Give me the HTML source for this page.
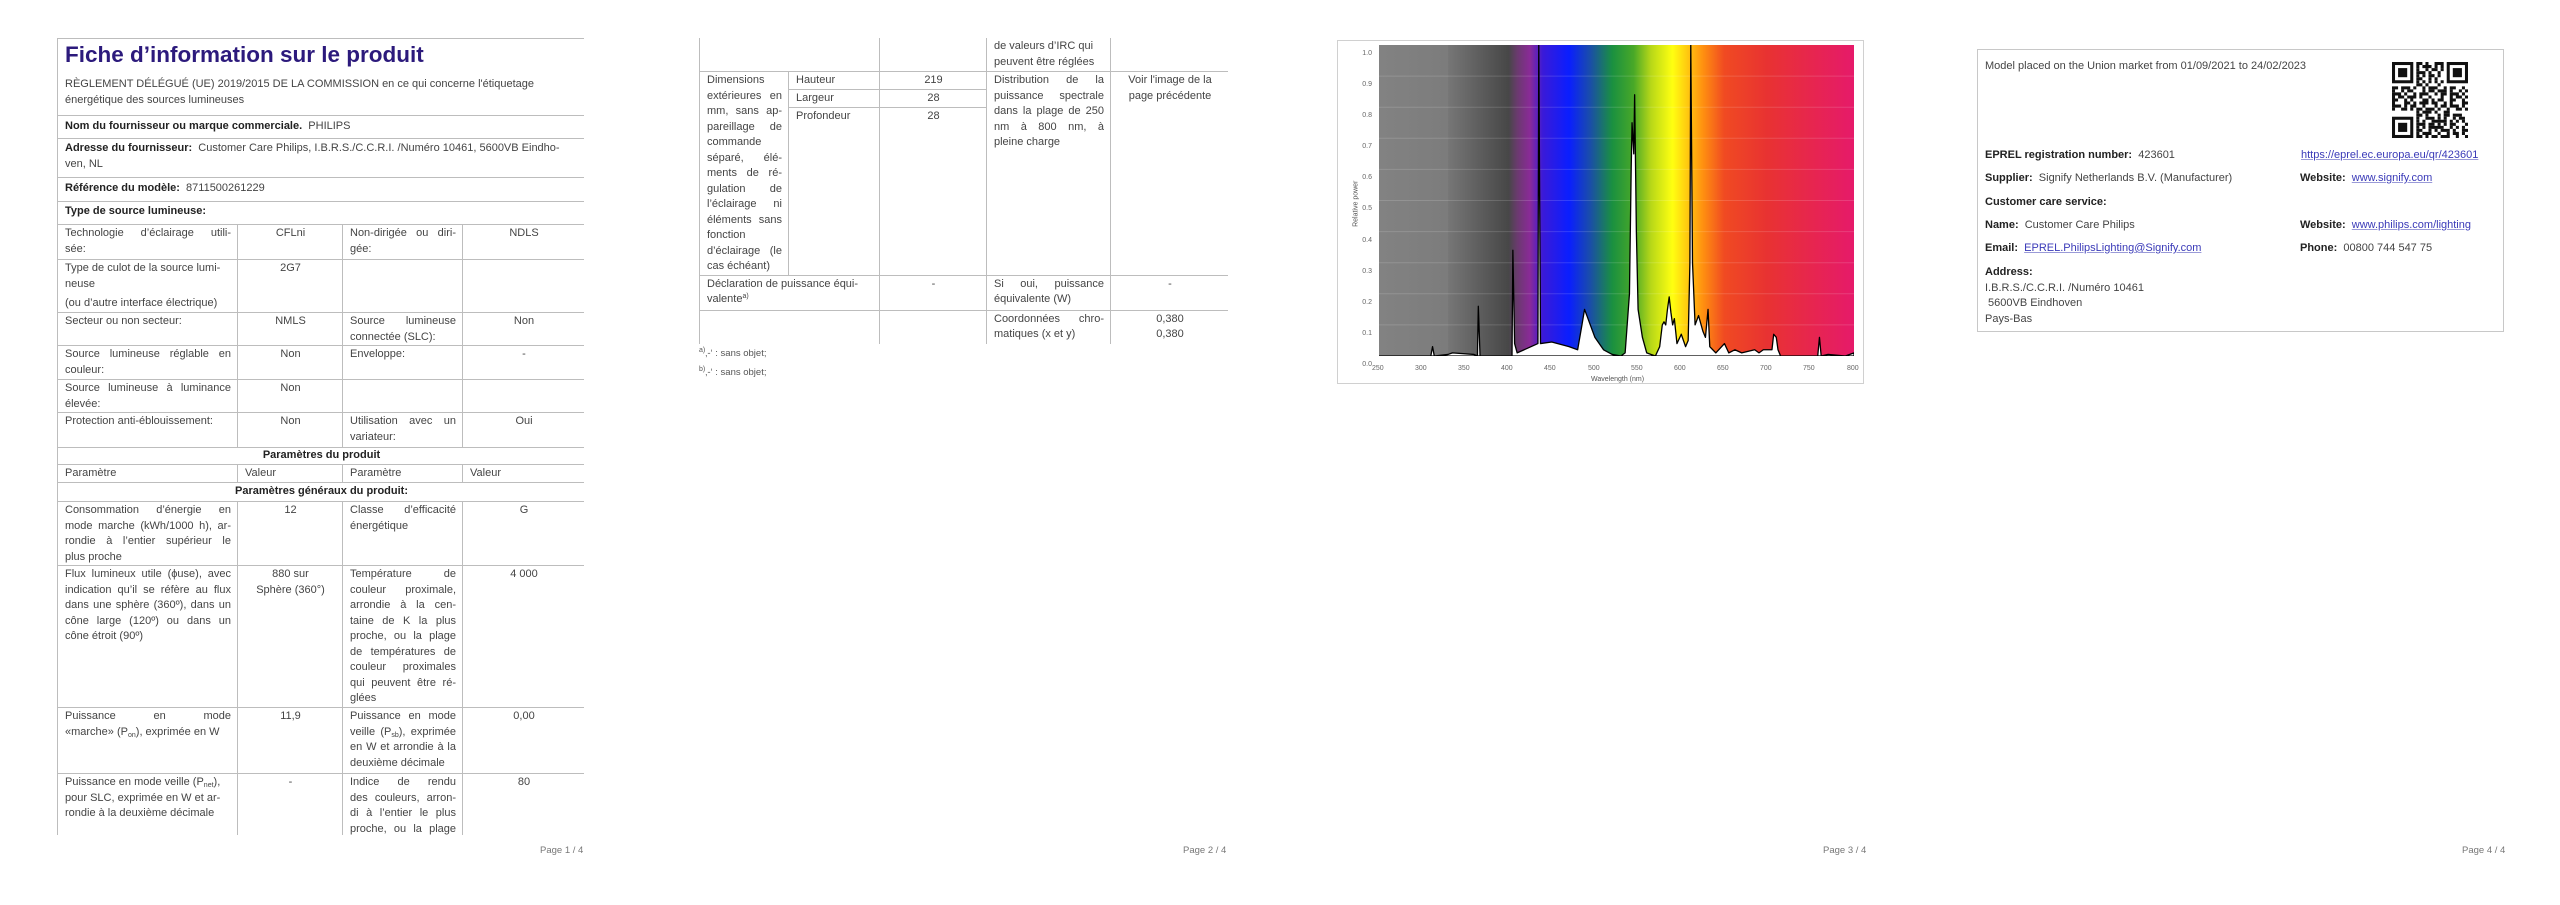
<!DOCTYPE html>
<html><head><meta charset="utf-8">
<style>
*{margin:0;padding:0;box-sizing:border-box}
body{width:2560px;height:905px;background:#fff;position:relative;overflow:hidden;font-family:"Liberation Sans",sans-serif;font-size:11px;color:#444;line-height:15.5px}
.abs{position:absolute}
table{border-collapse:collapse;table-layout:fixed}
td{border:1px solid #bdbdbd;vertical-align:top;padding:1px 6px 0 7px;overflow:hidden;white-space:nowrap}
.c{text-align:center}
b{color:#222}
.pn{position:absolute;top:843px;font-size:9.5px;color:#777}
a{color:#3a3ab8;text-decoration:underline;text-decoration-color:#9a9ad8}
.j{text-align:justify;text-align-last:justify;white-space:nowrap}
sub,sup{font-size:7px;line-height:0}
sub{vertical-align:-2px}
sup{vertical-align:4px}
</style></head><body>

<!-- PAGE 1 -->
<div class="abs" style="left:57px;top:38px;width:527px;height:797px;overflow:hidden">
<table style="width:527px">
<colgroup><col style="width:180px"><col style="width:105px"><col style="width:120px"><col style="width:122px"></colgroup>
<tr style="height:77px"><td colspan="4" style="padding-top:2px"><div style="font-size:22.5px;font-weight:bold;color:#2c1a7c;line-height:28px">Fiche d’information sur le produit</div><div style="margin-top:8px">RÈGLEMENT DÉLÉGUÉ (UE) 2019/2015 DE LA COMMISSION en ce qui concerne l'étiquetage<br>énergétique des sources lumineuses</div></td></tr>
<tr style="height:23px"><td colspan="4" style="padding-top:3px"><b>Nom du fournisseur ou marque commerciale.</b>&nbsp; PHILIPS</td></tr>
<tr style="height:39px"><td colspan="4" style="padding-top:2px"><b>Adresse du fournisseur:</b>&nbsp; Customer Care Philips, I.B.R.S./C.C.R.I. /Numéro 10461, 5600VB Eindho-<br>ven, NL</td></tr>
<tr style="height:24px"><td colspan="4" style="padding-top:3px"><b>Référence du modèle:</b>&nbsp; 8711500261229</td></tr>
<tr style="height:23px"><td colspan="4" style="padding-top:2px"><b>Type de source lumineuse:</b></td></tr>
<tr style="height:35px"><td><div class="j">Technologie d’éclairage utili-</div>sée:</td><td class="c">CFLni</td><td><div class="j">Non-dirigée ou diri-</div>gée:</td><td class="c">NDLS</td></tr>
<tr style="height:53px"><td>Type de culot de la source lumi-<br>neuse<div style="margin-top:4px">(ou d’autre interface électrique)</div></td><td class="c">2G7</td><td></td><td></td></tr>
<tr style="height:33px"><td>Secteur ou non secteur:</td><td class="c">NMLS</td><td><div class="j">Source lumineuse</div>connectée (SLC):</td><td class="c">Non</td></tr>
<tr style="height:34px"><td><div class="j">Source lumineuse réglable en</div>couleur:</td><td class="c">Non</td><td>Enveloppe:</td><td class="c">-</td></tr>
<tr style="height:33px"><td><div class="j">Source lumineuse à luminance</div>élevée:</td><td class="c">Non</td><td></td><td></td></tr>
<tr style="height:35px"><td>Protection anti-éblouissement:</td><td class="c">Non</td><td><div class="j">Utilisation avec un</div>variateur:</td><td class="c">Oui</td></tr>
<tr style="height:17px"><td colspan="4" class="c" style="padding-top:0"><b>Paramètres du produit</b></td></tr>
<tr style="height:18px"><td>Paramètre</td><td>Valeur</td><td>Paramètre</td><td>Valeur</td></tr>
<tr style="height:19px"><td colspan="4" class="c"><b>Paramètres généraux du produit:</b></td></tr>
<tr style="height:64px"><td><div class="j">Consommation d’énergie en</div><div class="j">mode marche (kWh/1000 h), ar-</div><div class="j">rondie à l’entier supérieur le</div>plus proche</td><td class="c">12</td><td><div class="j">Classe d’efficacité</div>énergétique</td><td class="c">G</td></tr>
<tr style="height:142px"><td><div class="j">Flux lumineux utile (ϕuse), avec</div><div class="j">indication qu’il se réfère au flux</div><div class="j">dans une sphère (360º), dans un</div><div class="j">cône large (120º) ou dans un</div>cône étroit (90º)</td><td class="c">880 sur<br>Sphère (360°)</td><td><div class="j">Température de</div><div class="j">couleur proximale,</div><div class="j">arrondie à la cen-</div><div class="j">taine de K la plus</div><div class="j">proche, ou la plage</div><div class="j">de températures de</div><div class="j">couleur proximales</div><div class="j">qui peuvent être ré-</div>glées</td><td class="c">4 000</td></tr>
<tr style="height:66px"><td><div class="j">Puissance en mode</div>«marche» (P<sub>on</sub>), exprimée en W</td><td class="c">11,9</td><td><div class="j">Puissance en mode</div><div class="j">veille (P<sub>sb</sub>), exprimée</div><div class="j">en W et arrondie à la</div>deuxième décimale</td><td class="c">0,00</td></tr>
<tr style="height:90px"><td>Puissance en mode veille (P<sub>net</sub>),<br>pour SLC, exprimée en W et ar-<br>rondie à la deuxième décimale</td><td class="c">-</td><td><div class="j">Indice de rendu</div><div class="j">des couleurs, arron-</div><div class="j">di à l’entier le plus</div><div class="j">proche, ou la plage</div>de valeurs</td><td class="c">80</td></tr>
</table></div>
<div class="pn" style="left:540px">Page 1 / 4</div>

<!-- PAGE 2 -->
<div class="abs" style="left:699px;top:38px;width:529px;height:306px;overflow:hidden">
<table style="width:529px;margin-top:-1px">
<colgroup><col style="width:89px"><col style="width:91px"><col style="width:107px"><col style="width:124px"><col style="width:118px"></colgroup>
<tr style="height:34px"><td colspan="2"></td><td></td><td>de valeurs d’IRC qui<br>peuvent être réglées</td><td></td></tr>
<tr style="height:18px"><td rowspan="3"><div class="j">Dimensions</div><div class="j">extérieures en</div><div class="j">mm, sans ap-</div><div class="j">pareillage de</div>commande<div class="j">séparé, élé-</div><div class="j">ments de ré-</div><div class="j">gulation de</div><div class="j">l’éclairage ni</div><div class="j">éléments sans</div>fonction<div class="j">d’éclairage (le</div>cas échéant)</td><td>Hauteur</td><td class="c">219</td><td rowspan="3"><div class="j">Distribution de la</div><div class="j">puissance spectrale</div><div class="j">dans la plage de 250</div><div class="j">nm à 800 nm, à</div>pleine charge</td><td rowspan="3" class="c">Voir l'image de la<br>page précédente</td></tr>
<tr style="height:18px"><td>Largeur</td><td class="c">28</td></tr>
<tr style="height:167px"><td>Profondeur</td><td class="c">28</td></tr>
<tr style="height:35px"><td colspan="2">Déclaration de puissance équi-<br>valente<sup>a)</sup></td><td class="c">-</td><td><div class="j">Si oui, puissance</div>équivalente (W)</td><td class="c">-</td></tr>
<tr style="height:34px"><td colspan="2"></td><td></td><td><div class="j">Coordonnées chro-</div>matiques (x et y)</td><td class="c">0,380<br>0,380</td></tr>
</table></div>
<div class="abs" style="left:699px;top:344px;font-size:9.5px;color:#555;line-height:19px"><sup>a)</sup>‚-‘ : sans objet;<br><sup>b)</sup>‚-‘ : sans objet;</div>
<div class="pn" style="left:1183px">Page 2 / 4</div>

<!-- PAGE 3 chart -->
<div class="abs" style="left:1337px;top:40px;width:527px;height:344px;border:1px solid #d0d0d0"></div>
<svg class="abs" style="left:1379px;top:45px" width="475" height="311" viewBox="250 0 550 1" preserveAspectRatio="none">
<defs><linearGradient id="g" x1="0" x2="1" y1="0" y2="0">
<stop offset="0" stop-color="#828282"/><stop offset="0.145" stop-color="#7c7c7c"/><stop offset="0.146" stop-color="#767676"/>
<stop offset="0.273" stop-color="#474747"/><stop offset="0.291" stop-color="#6a3a6e"/><stop offset="0.318" stop-color="#8a2a98"/>
<stop offset="0.345" stop-color="#3a1ad8"/><stop offset="0.4" stop-color="#0a1eff"/><stop offset="0.445" stop-color="#1a4ea8"/>
<stop offset="0.491" stop-color="#1a9040"/><stop offset="0.536" stop-color="#48a828"/><stop offset="0.573" stop-color="#b8d818"/>
<stop offset="0.618" stop-color="#ffff10"/><stop offset="0.645" stop-color="#ffd010"/><stop offset="0.682" stop-color="#ff9010"/>
<stop offset="0.727" stop-color="#f04a22"/><stop offset="0.818" stop-color="#e83232"/><stop offset="1" stop-color="#e61a6a"/>
</linearGradient></defs>
<rect x="250" y="0" width="550" height="1" fill="url(#g)"/>
<g stroke="rgba(255,255,255,0.15)" stroke-width="1">
<line x1="250" x2="800" y1="0.1" y2="0.1" vector-effect="non-scaling-stroke"/><line x1="250" x2="800" y1="0.2" y2="0.2" vector-effect="non-scaling-stroke"/><line x1="250" x2="800" y1="0.3" y2="0.3" vector-effect="non-scaling-stroke"/><line x1="250" x2="800" y1="0.4" y2="0.4" vector-effect="non-scaling-stroke"/><line x1="250" x2="800" y1="0.5" y2="0.5" vector-effect="non-scaling-stroke"/><line x1="250" x2="800" y1="0.6" y2="0.6" vector-effect="non-scaling-stroke"/><line x1="250" x2="800" y1="0.7" y2="0.7" vector-effect="non-scaling-stroke"/><line x1="250" x2="800" y1="0.8" y2="0.8" vector-effect="non-scaling-stroke"/><line x1="250" x2="800" y1="0.9" y2="0.9" vector-effect="non-scaling-stroke"/>
</g>
<polygon fill="#fff" stroke="#000" stroke-width="1.3" vector-effect="non-scaling-stroke" stroke-linejoin="round" points="250,1 310,1 312,0.97 314,1 330,0.995 335,0.99 360,0.995 364,1 365,0.84 367,1 404,1 405,0.66 407,0.96 410,0.99 434,0.96 435,0 437,0.96 450,0.955 470,0.97 480,0.98 485,0.9 488,0.85 492,0.88 500,0.94 510,0.98 520,0.995 530,1 535,0.99 540,0.8 542,0.4 543,0.25 544,0.3 545,0.35 546,0.16 548,0.6 550,0.85 555,0.94 560,0.99 570,1 575,0.97 578,0.9 580,0.89 582,0.9 584,0.85 586,0.81 588,0.86 590,0.9 592,0.88 595,0.96 600,0.93 605,0.97 608,0.95 610,0.7 611,0 613,0.7 616,0.9 620,0.87 625,0.92 628,0.94 631,0.85 633,0.97 640,0.99 650,0.96 655,0.99 662,0.98 670,0.99 685,0.98 690,0.99 695,0.98 705,0.98 707,0.93 710,0.94 712,0.98 715,1 758,1 760,0.94 762,1 770,0.995 790,1 800,0.99 800,1"/>
</svg>
<div class="abs" style="left:1348px;top:38px;width:24px;font-size:7px;color:#666;text-align:right;line-height:31.1px">1.0<br>0.9<br>0.8<br>0.7<br>0.6<br>0.5<br>0.4<br>0.3<br>0.2<br>0.1<br>0.0</div>
<div class="abs" style="left:1366px;top:361px;font-size:7px;color:#666;width:520px">
<span class="abs" style="left:6px">250</span><span class="abs" style="left:49px">300</span><span class="abs" style="left:92px">350</span><span class="abs" style="left:135px">400</span><span class="abs" style="left:178px">450</span><span class="abs" style="left:222px">500</span><span class="abs" style="left:265px">550</span><span class="abs" style="left:308px">600</span><span class="abs" style="left:351px">650</span><span class="abs" style="left:394px">700</span><span class="abs" style="left:437px">750</span><span class="abs" style="left:481px">800</span></div>
<div class="abs" style="left:1591px;top:372px;font-size:7px;color:#555">Wavelength (nm)</div>
<div class="abs" style="left:1326px;top:196px;font-size:7px;color:#555;transform:rotate(-90deg);width:60px;text-align:center">Relative power</div>
<div class="pn" style="left:1823px">Page 3 / 4</div>

<!-- PAGE 4 -->
<div class="abs" style="left:1977px;top:49px;width:527px;height:283px;border:1px solid #c8c8c8"></div>
<div class="abs" style="left:1985px;top:59px">Model placed on the Union market from 01/09/2021 to 24/02/2023</div>
<svg class="abs" style="left:2392px;top:62px" width="76" height="76" viewBox="0 0 25 25">
<g fill="none" stroke="#111" stroke-width="1">
<rect x="0.5" y="0.5" width="6" height="6"/><rect x="18.5" y="0.5" width="6" height="6"/><rect x="0.5" y="18.5" width="6" height="6"/>
</g>
<g fill="#111"><rect x="2" y="2" width="3" height="3"/><rect x="20" y="2" width="3" height="3"/><rect x="2" y="20" width="3" height="3"/></g>
<g stroke="#111" stroke-width="1">
<line x1="8" x2="17" y1="0.5" y2="0.5" stroke-dasharray="2 1 1 2 3"/>
<line x1="8" x2="17" y1="1.5" y2="1.5" stroke-dasharray="1 1 3 1 1"/>
<line x1="8" x2="17" y1="2.5" y2="2.5" stroke-dasharray="1 2 1 1 2 1"/>
<line x1="8" x2="17" y1="3.5" y2="3.5" stroke-dasharray="3 1 1 2 1"/>
<line x1="8" x2="17" y1="4.5" y2="4.5" stroke-dasharray="1 1 1 1 2 1"/>
<line x1="8" x2="17" y1="5.5" y2="5.5" stroke-dasharray="2 2 1 1 1"/>
<line x1="8" x2="17" y1="6.5" y2="6.5" stroke-dasharray="1 1 1 1 1 1"/>
<line x1="0" x2="25" y1="7.5" y2="7.5" stroke-dasharray="0 8 2 1 1 3 1 2"/>
<line x1="0" x2="25" y1="8.5" y2="8.5" stroke-dasharray="2 1 3 1 1 2 1 1 3 2 1 1 2"/>
<line x1="0" x2="25" y1="9.5" y2="9.5" stroke-dasharray="1 2 1 1 2 3 1 1 2 1 3 1"/>
<line x1="0" x2="25" y1="10.5" y2="10.5" stroke-dasharray="3 1 1 2 1 1 3 2 1 1 2 1"/>
<line x1="0" x2="25" y1="11.5" y2="11.5" stroke-dasharray="1 1 2 1 3 1 1 2 1 3 1 2"/>
<line x1="0" x2="25" y1="12.5" y2="12.5" stroke-dasharray="2 2 1 1 1 3 2 1 1 1 2 2"/>
<line x1="0" x2="25" y1="13.5" y2="13.5" stroke-dasharray="1 3 2 1 1 1 3 1 2 2 1 1"/>
<line x1="0" x2="25" y1="14.5" y2="14.5" stroke-dasharray="3 1 1 1 2 2 1 3 1 1 2 1"/>
<line x1="0" x2="25" y1="15.5" y2="15.5" stroke-dasharray="1 2 2 1 1 1 2 1 3 1 1 2"/>
<line x1="0" x2="25" y1="16.5" y2="16.5" stroke-dasharray="0 8 1 1 3 1 1 2 2 1"/>
<line x1="8" x2="25" y1="17.5" y2="17.5" stroke-dasharray="2 1 1 3 1 1 2 1 3"/>
<line x1="8" x2="25" y1="18.5" y2="18.5" stroke-dasharray="1 2 3 1 1 1 1 2 1"/>
<line x1="8" x2="25" y1="19.5" y2="19.5" stroke-dasharray="1 1 1 2 5 1 1 1"/>
<line x1="8" x2="25" y1="20.5" y2="20.5" stroke-dasharray="3 1 2 1 1 1 1 1 2"/>
<line x1="8" x2="25" y1="21.5" y2="21.5" stroke-dasharray="1 1 1 1 5 2 1 1"/>
<line x1="8" x2="25" y1="22.5" y2="22.5" stroke-dasharray="2 2 1 1 1 1 3 1 1"/>
<line x1="8" x2="25" y1="23.5" y2="23.5" stroke-dasharray="1 1 3 2 1 2 1 1 2"/>
<line x1="8" x2="25" y1="24.5" y2="24.5" stroke-dasharray="2 1 1 1 2 1 3 2 1"/>
</g></svg>
<div class="abs" style="left:1985px;top:148px"><b>EPREL registration number:</b>&nbsp; 423601</div>
<div class="abs" style="left:2301px;top:148px"><a>https://eprel.ec.europa.eu/qr/423601</a></div>
<div class="abs" style="left:1985px;top:171px"><b>Supplier:</b>&nbsp; Signify Netherlands B.V. (Manufacturer)</div>
<div class="abs" style="left:2300px;top:171px"><b>Website:</b>&nbsp; <a>www.signify.com</a></div>
<div class="abs" style="left:1985px;top:195px"><b>Customer care service:</b></div>
<div class="abs" style="left:1985px;top:218px"><b>Name:</b>&nbsp; Customer Care Philips</div>
<div class="abs" style="left:2300px;top:218px"><b>Website:</b>&nbsp; <a>www.philips.com/lighting</a></div>
<div class="abs" style="left:1985px;top:241px"><b>Email:</b>&nbsp; <a>EPREL.PhilipsLighting@Signify.com</a></div>
<div class="abs" style="left:2300px;top:241px"><b>Phone:</b>&nbsp; 00800 744 547 75</div>
<div class="abs" style="left:1985px;top:265px"><b>Address:</b><br>I.B.R.S./C.C.R.I. /Numéro 10461<br>&nbsp;5600VB Eindhoven<br>Pays-Bas</div>
<div class="pn" style="left:2462px">Page 4 / 4</div>
</body></html>
